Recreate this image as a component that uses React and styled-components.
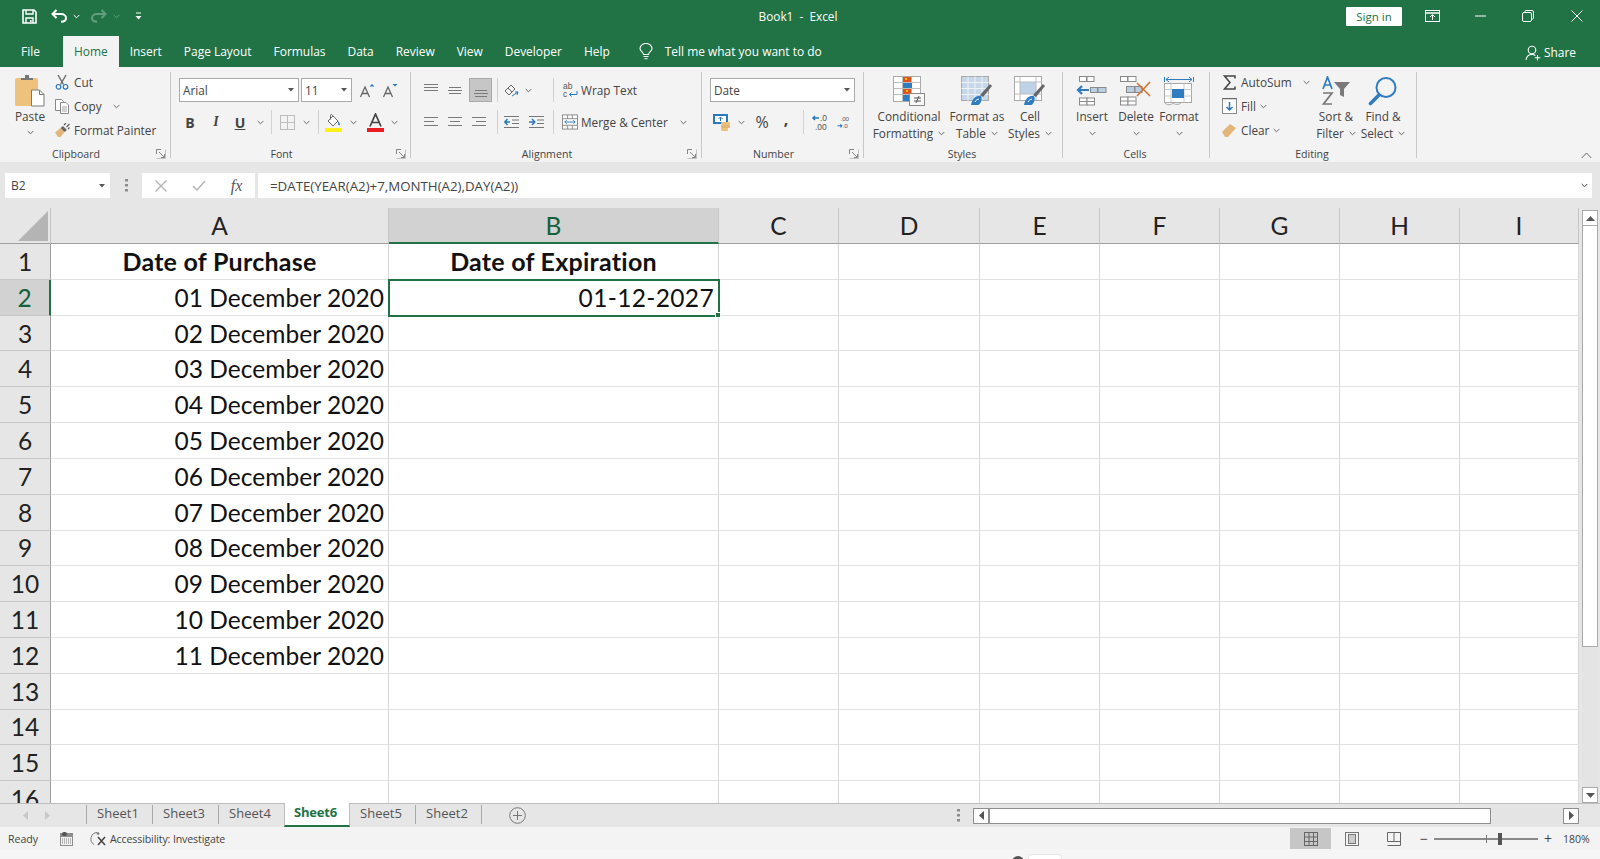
import React from "react";
import styled, { createGlobalStyle } from "styled-components";

const UI = `"Open Sans", "Noto Sans", "Liberation Sans", sans-serif`;
const SHEET = `Lato, "Liberation Sans", sans-serif`;
const GREEN = "#217346";

const Global = createGlobalStyle`
  html, body { margin: 0; padding: 0; background: #f3f3f3; }
  body { font-family: ${UI}; overflow: hidden; }
  * { box-sizing: border-box; }
`;

const Page = styled.div`
  width: 1600px; height: 859px; display: flex; flex-direction: column; overflow: hidden;
`;

/* ---------- title bar ---------- */
const TitleBar = styled.header`
  height: 34px; padding-bottom: 2px; background: ${GREEN}; display: grid; grid-template-columns: 1fr auto 1fr; align-items: center; color: #fff;
`;
const QuickAccess = styled.div`display: flex; align-items: center; padding-left: 20px;`;
const QuickSlot = styled.span`
  width: ${p => p.$w}px; margin-left: ${p => p.$ml ?? 0}px; display: flex; justify-content: center; align-items: center; opacity: ${p => p.$dim ? 0.3 : 1};
`;
const Title = styled.div`font-size: 11.8px; white-space: pre; margin-left: -4px;`;
const WindowControls = styled.div`display: flex; align-items: center; justify-content: flex-end;`;
const SignIn = styled.button`
  width: 56px; height: 19px; border: 0; padding: 0; background: #fff; color: ${GREEN}; font: 11.5px ${UI}; border-radius: 1px; margin-right: 5px;
`;
const WinSlot = styled.span`width: ${p => p.$w}px; display: flex; justify-content: center; align-items: center;`;

/* ---------- tabs ---------- */
const TabBar = styled.nav`
  height: 33px; background: ${GREEN}; display: flex; align-items: flex-end; padding-left: 10px; color: #fff; font-size: 11.95px;
`;
const Tab = styled.div`
  height: 31px; padding: 0 11px; margin-left: ${p => p.$ml ?? 0}px; display: flex; align-items: center;
  ${p => p.$active && `background:#f3f3f3; color:${GREEN};`}
`;
const TellMe = styled.div`display: flex; align-items: center; gap: 12px; height: 31px; padding: 0 0 0 18px; flex: 1;`;
const Share = styled.div`display: flex; align-items: center; gap: 3px; height: 31px; padding: 2px 24px 0 0;`;

/* ---------- ribbon ---------- */
const Ribbon = styled.section`
  height: 95px; background: #f3f3f3; padding-top: 5px; display: flex; position: relative; color: #444; font-size: 11.8px;
`;
const Group = styled.div`
  width: ${p => p.$w}px; height: 86px; flex: none; display: flex; flex-direction: column; border-right: 1px solid #c8c8c8;
`;
const GroupBody = styled.div`display: flex; height: 72px; flex: none; padding-left: ${p => p.$pl ?? 0}px;`;
const Foot = styled.div`
  display: flex; height: 12px; margin-top: 4px; line-height: 12px; font-size: 10.6px; color: #444; padding-right: ${p => p.$launcher ? 0 : 2}px;
`;
const FootLabel = styled.span`flex: 1; text-align: center;`;
const Launcher = styled.span`width: 18px; display: flex; justify-content: center; align-items: center; flex: none;`;

const PasteButton = styled.div`
  width: 42px; margin: 0 3px 0 9px; display: flex; flex-direction: column; align-items: center; gap: 2px; padding-top: 3px; line-height: 15px;
`;
const PasteChev = styled.span`display: flex; margin-top: 4px;`;
const SmallColumn = styled.div`display: flex; flex-direction: column; gap: 4px; width: ${p => p.$w ?? "auto"};`;
const SmallRow = styled.div`height: 20px; display: flex; align-items: center; gap: ${p => p.$gap ?? 4}px; white-space: nowrap;`;
const SmallIcon = styled.span`width: 16px; flex: none; display: flex; justify-content: center; align-items: center;`;

const ControlRows = styled.div`display: flex; flex-direction: column; gap: 8px; padding-top: 6px;`;
const ControlRow = styled.div`display: flex; align-items: center; height: 24px;`;
const Select = styled.div`
  width: ${p => p.$w}px; height: 24px; background: #fff; border: 1px solid #aaa; margin-right: ${p => p.$mr ?? 0}px;
  display: flex; align-items: center; justify-content: space-between; padding: 0 4px 0 3px; font-size: 11.8px; color: #444;
`;
const Slot = styled.span`
  width: ${p => p.$w}px; height: 24px; flex: none; display: flex; align-items: center; justify-content: center;
  margin-left: ${p => p.$ml ?? 0}px; margin-right: ${p => p.$mr ?? 0}px;
  ${p => p.$active && "background:#c6c6c6; border:1px solid #aaa;"}
`;
const Divider = styled.span`
  width: 1px; height: 24px; flex: none; background: #d2d2d2; margin-left: ${p => p.$ml ?? 0}px; margin-right: ${p => p.$mr ?? 0}px;
`;
const FormatLetter = styled.span`
  font-family: ${p => p.$serif ? `"Liberation Serif", serif` : UI}; font-size: ${p => p.$size ?? 14}px; color: #444;
  font-weight: ${p => p.$weight ?? 700}; font-style: ${p => p.$italic ? "italic" : "normal"};
  text-decoration: ${p => p.$under ? "underline" : "none"}; margin-top: ${p => p.$mt ?? 0}px;
`;
const WrapButton = styled.div`display: flex; align-items: center; gap: 3px; padding-left: 8px; white-space: nowrap; margin-top: ${p => p.$mt ?? 0}px;`;

const LargeButton = styled.div`
  width: ${p => p.$w}px; flex: none; display: flex; flex-direction: column; align-items: center; white-space: nowrap; line-height: 17px;
`;
const LargeIcon = styled.div`height: 36px; display: flex; align-items: center; justify-content: center; padding-top: 2px;`;
const LabelLine = styled.span`display: flex; align-items: center; gap: 5px; height: 17px;`;
const CollapseBtn = styled.span`position: absolute; right: 8px; bottom: 3px; display: flex;`;

/* ---------- formula bar ---------- */
const FormulaBar = styled.section`
  height: 46px; background: #e6e6e6; padding: 11px 8px 10px 5px; display: flex; align-items: stretch; color: #444;
`;
const NameBox = styled.div`
  width: 105px; background: #fff; display: flex; align-items: center; justify-content: space-between; padding: 0 5px 0 6px; font-size: 12px;
`;
const Grip = styled.span`width: 32px; display: flex; align-items: center; justify-content: center;`;
const FxBox = styled.div`width: 113px; background: #fff; display: flex; align-items: center; margin-right: 3px;`;
const FxSlot = styled.span`width: ${p => p.$w}px; display: flex; justify-content: center;`;
const Fx = styled.span`font: italic 16px "Liberation Serif", serif; color: #555;`;
const FormulaInput = styled.div`
  flex: 1; background: #fff; display: flex; align-items: center; justify-content: space-between; padding: 0 4px 0 12px; font-size: 13.3px; color: #444;
`;

/* ---------- sheet grid ---------- */
const SheetArea = styled.main`flex: 1; min-height: 0; display: flex; background: #e6e6e6; overflow: hidden;`;
const GridWrap = styled.div`width: 1579px; flex: none; height: 100%; overflow: hidden; background: #fff;`;
const Grid = styled.div`
  display: grid; grid-template-columns: 51px 338px 330px 120px 141px 120px 120px 120px 120px 119px;
  grid-auto-rows: 35.82px; grid-template-rows: 36px; font-family: ${SHEET};
`;
const Corner = styled.div`background: #e6e6e6; border-bottom: 1px solid #9f9f9f; border-right: 1px solid #c6c6c6; display: flex; align-items: flex-end; justify-content: flex-end; padding: 0 2px 2px 0;`;
const ColHead = styled.div`
  display: flex; align-items: center; justify-content: center; font-size: 24.5px;
  background: ${p => p.$sel ? "#d2d2d2" : "#e6e6e6"}; color: ${p => p.$sel ? "#14613a" : "#222"};
  border-right: 1px solid #c6c6c6; border-bottom: ${p => p.$sel ? `2px solid ${GREEN}` : "1px solid #9f9f9f"};
`;
const RowHead = styled.div`
  display: flex; align-items: center; justify-content: center; font-size: 24.5px;
  background: ${p => p.$sel ? "#d2d2d2" : "#e6e6e6"}; color: ${p => p.$sel ? "#14613a" : "#222"};
  border-bottom: 1px solid #c6c6c6; border-right: ${p => p.$sel ? `2px solid ${GREEN}` : "1px solid #9f9f9f"};
`;
const Cell = styled.div`
  display: flex; align-items: center; justify-content: ${p => p.$bold ? "center" : "flex-end"};
  padding-right: ${p => p.$bold ? 0 : 4}px; font-size: ${p => p.$bold ? 25 : 24.5}px; color: #111; font-weight: ${p => p.$bold ? 700 : 400};
  letter-spacing: ${p => p.$bold ? 0.25 : p.$sel ? 0.35 : 0.05}px; white-space: nowrap; position: relative;
  border-right: 1px solid #d8d8d8; border-bottom: 1px solid #e2e2e2;
  ${p => p.$sel && `outline: 2px solid ${GREEN}; outline-offset: -1px; z-index: 1;`}
`;
const FillHandle = styled.i`
  position: absolute; right: -3px; bottom: -3px; width: 6px; height: 6px; background: ${GREEN}; border: 1px solid #fff;
`;
const VScroll = styled.aside`
  flex: 1; display: flex; flex-direction: column; padding: 2px 2px 0 3px; background: #e6e6e6;
`;
const ScrollBtn = styled.span`
  height: ${p => p.$h ?? 16}px; background: #fff; border: 1px solid #ababab; display: flex; align-items: center; justify-content: center; flex: none;
`;
const VThumb = styled.span`height: 421px; background: #fff; border: 1px solid #ababab; border-top: 0; flex: none;`;
const Track = styled.span`
  flex: 1; background-color: #e4e4e4; background-image: radial-gradient(#d2d2d2 0.5px, transparent 0.6px); background-size: 2px 2px;
`;

/* ---------- sheet tabs ---------- */
const SheetBar = styled.section`
  height: 24px; background: #e6e6e6; border-top: 1px solid #bdbdbd; display: flex; align-items: stretch; color: #555; position: relative;
`;
const NavArrows = styled.div`width: 86px; display: flex; align-items: center; padding-left: 23px; gap: 17px;`;
const SheetTab = styled.div`
  width: ${p => p.$w ?? 65}px; height: 24px; margin-top: -1px; display: flex; align-items: center; justify-content: center; font-size: 13px; padding: 0 3px 4px 0;
  ${p => p.$active
    ? `background:#fff; color:${GREEN}; font-weight:700; border-bottom:2px solid ${GREEN}; border-left:1px solid #bdbdbd; border-right:1px solid #bdbdbd; letter-spacing:-.2px;`
    : ""}
`;
const TabSep = styled.span`width: 1px; height: 19px; background: #a8a8a8; align-self: center; flex: none; margin-bottom: 2px;`;
const AddSheet = styled.span`margin-left: 27px; display: flex; align-items: center;`;
const BarGrip = styled.span`margin-left: auto; display: flex; align-items: center;`;
const HScroll = styled.div`
  margin-left: 13px; width: 606px; margin-right: 21px; height: 16px; align-self: center; display: flex;
`;
const HThumb = styled.span`width: 502px; background: #fff; border: 1px solid #8f8f8f; flex: none;`;
const HBtn = styled.span`width: 16px; background: #fff; border: 1px solid #8f8f8f; flex: none; display: flex; align-items: center; justify-content: center;`;

/* ---------- status ---------- */
const StatusBar = styled.footer`
  height: 22px; background: #f3f3f3; display: flex; align-items: center; color: #444; font-size: 10.6px; padding-top: 1px;
`;
const StatusText = styled.span`padding-left: 8px; width: 58px;`;
const StatusIcon = styled.span`width: ${p => p.$w}px; margin-left: ${p => p.$ml ?? 0}px; display: flex; justify-content: center; align-items: center; flex: none;`;
const A11y = styled.span`letter-spacing: -0.12px;`;
const StatusRight = styled.div`margin-left: auto; display: flex; align-items: center; height: 100%;`;
const ViewBtn = styled.span`
  width: ${p => p.$w}px; height: 22px; display: flex; align-items: center; justify-content: center; ${p => p.$active && "background:#c6c6c6;"}
`;
const ZoomTrack = styled.div`display: flex; align-items: center; width: 132px; justify-content: space-between; margin: 0 11px 0 5px; font-size: 14px; line-height: 1;`;
const Slider = styled.span`width: 104px; height: 2px; background: #8a8a8a; position: relative; display: block;`;
const SliderThumb = styled.i`position: absolute; left: 64px; top: -5px; width: 4px; height: 12px; background: #555;`;
const SliderTick = styled.i`position: absolute; left: 52px; top: -3px; width: 1px; height: 8px; background: #777;`;
const ZoomPct = styled.span`width: 37px; font-size: 10.5px;`;
const BottomStrip = styled.div`height: 10px; background: #f5f5f5; display: flex; padding-left: 1012px; align-items: flex-start; gap: 4px; overflow: hidden;`;
const Blob = styled.i`width: 12px; height: 12px; margin-top: 7px; border-radius: 50%; background: #555;`;
const WhiteTab = styled.i`width: 34px; height: 12px; margin-top: 5px; background: #fff; border: 1px solid #e6e6e6; border-radius: 4px 4px 0 0;`;

/* ---------- icons ---------- */
const Chev = ({ c = "#666" }) => (
  <svg width="7" height="5" viewBox="0 0 7 5"><path d="M.7 1 3.500 3.800 6.300 1" fill="none" stroke={c} strokeWidth="1" /></svg>
);
const Tri = () => <svg width="6" height="4" viewBox="0 0 6 4"><path d="M0 0h6L3 3.500z" fill="#555" /></svg>;
const Save = () => (
  <svg width="15" height="15" viewBox="0 0 15 15" fill="none" stroke="#fff" strokeWidth="1.600">
    <path d="M1 1h11l2 2v11H1z" /><path d="M4 1v4h7V1M4 14V9h7v5" strokeWidth="1.400" /><rect x="8" y="11" width="1.600" height="2" fill="#fff" stroke="none" />
  </svg>
);
const Undo = ({ flip }) => (
  <svg width="17" height="14" viewBox="0 0 17 14" style={flip ? { transform: "scaleX(-1)" } : undefined}>
    <path d="M5.500 1 1.500 5l4 4" fill="none" stroke="#fff" strokeWidth="2" />
    <path d="M2 5h8c3 0 5 1.800 5 4 0 2.200-2 3.800-5 3.800" fill="none" stroke="#fff" strokeWidth="2" />
  </svg>
);
const CustomizeQ = () => (
  <svg width="7" height="8" viewBox="0 0 7 8"><path d="M1 1h5" stroke="#fff" /><path d="M.5 4h6L3.500 7.500z" fill="#fff" /></svg>
);
const RibbonDisplay = () => (
  <svg width="15" height="12" viewBox="0 0 15 12" fill="none" stroke="#fff"><rect x=".5" y=".5" width="14" height="11" /><path d="M.5 3h14" strokeWidth="1.500" /><path d="M7.500 10V5M5 7l2.500-2.500L10 7" /></svg>
);
const Minimize = () => <svg width="11" height="2" viewBox="0 0 11 2"><path d="M0 1h11" stroke="#fff" /></svg>;
const Restore = () => (
  <svg width="12" height="12" viewBox="0 0 12 12" fill="none" stroke="#fff"><rect x=".5" y="2.500" width="9" height="9" rx="1.500" /><path d="M3 2.500V1.500a1 1 0 0 1 1-1h6a1.500 1.500 0 0 1 1.500 1.500v6a1 1 0 0 1-1 1H9.500" /></svg>
);
const CloseX = () => <svg width="12" height="12" viewBox="0 0 12 12"><path d="M.5.500l11 11M11.500.500l-11 11" stroke="#fff" /></svg>;
const Bulb = () => (
  <svg width="14" height="17" viewBox="0 0 14 17" fill="none" stroke="#fff" strokeWidth="1.100">
    <path d="M4.500 11.500C4.300 9 1 8.200 1 5.500a6 5 0 0 1 12 0c0 2.700-3.300 3.500-3.500 6z" /><path d="M4.500 13.500h5M5.500 15.800h3" />
  </svg>
);
const Person = () => (
  <svg width="16" height="16" viewBox="0 0 16 16" fill="none" stroke="#fff" strokeWidth="1.100">
    <circle cx="7" cy="5" r="3.800" /><path d="M1 15c.500-3.500 2.500-5.500 6-5.500 1.500 0 2.500.300 3.400 1" /><path d="M12.500 10v5.500M9.800 12.800h5.500" />
  </svg>
);
const PasteIcon = () => (
  <svg width="30" height="32" viewBox="0 0 30 32">
    <rect x="0" y="3" width="23" height="28" rx="1.500" fill="#eec27c" />
    <path d="M6 5V3h4V0h4v3h4v2z" fill="#777" />
    <path d="M16.500 15h8l4.500 4.500V31H16.500z" fill="#fff" stroke="#7a7a7a" />
    <path d="M24.500 15v4.500H29" fill="none" stroke="#7a7a7a" />
  </svg>
);
const Cut = () => (
  <svg width="14" height="16" viewBox="0 0 14 16" fill="none">
    <path d="M3 1l5.500 9.500M11 1 5.500 10.500" stroke="#6c6c6c" strokeWidth="1.400" />
    <circle cx="3.500" cy="12.800" r="2.300" stroke="#2a78bd" strokeWidth="1.200" /><circle cx="10.500" cy="12.800" r="2.300" stroke="#2a78bd" strokeWidth="1.200" />
  </svg>
);
const Copy = () => (
  <svg width="14" height="15" viewBox="0 0 14 15" fill="#fff" stroke="#7a7a7a" strokeWidth=".9">
    <path d="M.5.500h6l2 2v9h-8z" /><path d="M5.500 3.500h5.500l2.500 2.500v8.500h-8z" />
    <path d="M7 8h5M7 10h5M7 12h5" stroke="#9a9a9a" fill="none" />
  </svg>
);
const Brush = () => (
  <svg width="15" height="14" viewBox="0 0 15 14">
    <path d="M0 9.500 5.500 5 9.500 9l-4 5H3z" fill="#e3b57a" /><path d="M5.500 5 8 3l4 4-2.500 2z" fill="#666" /><path d="M9 2l2-2M11.500 4l3-3M13 6l1.500-1.500" stroke="#555" strokeWidth="1.100" />
  </svg>
);
const LaunchIcon = () => (
  <svg width="10" height="10" viewBox="0 0 10 10" fill="none" stroke="#777" strokeWidth=".9"><path d="M.5 5V.5H5M3 3l5 5M8.500 5v3.500H5" /><path d="M9.500 .5v9h-9" stroke="#bbb" /></svg>
);
const GrowA = ({ down }) => (
  <svg width="16" height="15" viewBox="0 0 16 15">
    <path d="M1.500 14 6 4l4.500 10M3.200 10.500h5.600" fill="none" stroke="#666" strokeWidth="1.300" />
    <path d={down ? "M10.500 1h5L13 3.500z" : "M10.500 3.500h5L13 1z"} fill="#2a78bd" />
  </svg>
);
const Borders = () => (
  <svg width="15" height="15" viewBox="0 0 15 15" fill="none" stroke="#bdbdbd"><rect x=".5" y=".5" width="14" height="14" /><path d="M7.500 0v15M0 7.500h15" /></svg>
);
const FillColor = () => (
  <svg width="18" height="19" viewBox="0 0 18 19">
    <path d="M3 8 8 3l5 5-5 5z" fill="#fff" stroke="#666" /><path d="M8 3C7 1 5.500 1 5.500 2.500v4" fill="none" stroke="#666" />
    <path d="M13 8c1.500 2 2 2.500 2 3.500s-1.500 1-1.800 0z" fill="#2a78bd" />
    <rect x="0" y="15" width="17" height="4" fill="#ffef1a" />
  </svg>
);
const FontColor = () => (
  <svg width="17" height="19" viewBox="0 0 17 19">
    <path d="M3 13.500 8.500 1 14 13.500M5 9.500h7" fill="none" stroke="#444" strokeWidth="1.700" />
    <rect x="0" y="15" width="17" height="4" fill="#ec1c24" />
  </svg>
);
const Lines = ({ y = [3, 7, 11], w = [[1, 15], [3, 13], [1, 15]] }) => (
  <svg width="16" height="14" viewBox="0 0 16 14" stroke="#7a7a7a">
    {y.map((v, i) => <path key={i} d={`M${w[i][0]} ${v}.5H${w[i][1]}`} />)}
  </svg>
);
const Orient = () => (
  <svg width="17" height="15" viewBox="0 0 17 15" fill="none" stroke="#666">
    <path d="M2 8 8 2l4 4-6 6zM5 5l4 4" /><path d="M9 13l6-4M15 9l-1 3M15 9l-3 0" stroke="#2a78bd" />
  </svg>
);
const Indent = ({ out }) => (
  <svg width="17" height="14" viewBox="0 0 17 14">
    <path d="M1 1.500h15M9 5h7M9 8.500h7M1 12.500h15" stroke="#777" />
    {out
      ? <path d="M7 7H3M4.500 4 1.800 7l2.700 3" fill="none" stroke="#2a78bd" strokeWidth="1.500" />
      : <path d="M1 7h5M4 4l2.800 3L4 10" fill="none" stroke="#2a78bd" strokeWidth="1.500" />}
  </svg>
);
const WrapIcon = () => (
  <svg width="16" height="16" viewBox="0 0 16 16">
    <text x="1" y="7" fontSize="8.500" fill="#555" fontFamily="Liberation Sans">ab</text>
    <text x="1" y="15" fontSize="8.500" fill="#555" fontFamily="Liberation Sans">c</text>
    <path d="M15 9v3.500H7.500M9.500 10.500l-2 2 2 2" fill="none" stroke="#2a78bd" />
  </svg>
);
const MergeIcon = () => (
  <svg width="17" height="16" viewBox="0 0 17 16" fill="none" stroke="#888">
    <rect x=".5" y=".5" width="16" height="15" fill="#fff" /><path d="M.5 4.500h16M.5 11.500h16M6 .5v4M11 .5v4M6 11.500v4M11 11.500v4" />
    <path d="M3 8h11M5 6 3 8l2 2M12 6l2 2-2 2" stroke="#2a78bd" />
  </svg>
);
const Currency = () => (
  <svg width="17" height="17" viewBox="0 0 17 17">
    <rect x="0" y="0" width="15" height="10" fill="#2a78bd" /><rect x="2" y="2" width="11" height="6" fill="#fff" />
    <path d="M7.500 3v4M5.500 5l2-2 2 2" stroke="#2a78bd" fill="none" />
    <rect x="8" y="8" width="9" height="3" rx="1" fill="#eec27c" /><rect x="8" y="11" width="9" height="3" rx="1" fill="#e3b57a" /><rect x="8" y="14" width="7" height="3" rx="1" fill="#eec27c" />
  </svg>
);
const DecIcon = ({ more }) => (
  <svg width="19" height="17" viewBox="0 0 19 17">
    <text x={more ? 9 : 6} y="7" fontSize="8.500" fill="#555" fontFamily="Liberation Sans">{more ? ".0" : ".00"}</text>
    <text x={more ? 4 : 9} y="16" fontSize="8.500" fill="#555" fontFamily="Liberation Sans">{more ? ".00" : ".0"}</text>
    {more
      ? <path d="M8 4H2M4 2 2 4l2 2" fill="none" stroke="#2a78bd" strokeWidth="1.500" />
      : <path d="M2 13h6M6 11l2 2-2 2" fill="none" stroke="#2a78bd" strokeWidth="1.500" />}
  </svg>
);
const CondFmt = () => (
  <svg width="32" height="30" viewBox="0 0 32 30">
    <g fill="#fff" stroke="#a9a9a9"><rect x=".5" y=".5" width="27" height="25" /></g>
    <path d="M9.500 .5v25M18.500 .5v25M.5 6.500h27M.5 12.500h27M.5 18.500h27" stroke="#bdbdbd" fill="none" />
    <rect x="10" y="1" width="8" height="5" fill="#e2521f" /><rect x="12" y="2" width="2" height="2" fill="#ffc000" />
    <rect x="10" y="7" width="9" height="5" fill="#2f7cc1" /><rect x="10" y="13" width="8" height="5" fill="#e2521f" /><rect x="13" y="14" width="2" height="2" fill="#ffc000" /><rect x="10" y="19" width="6" height="6" fill="#2f7cc1" />
    <rect x="16.500" y="17.500" width="15" height="12" fill="#f8f8f8" stroke="#8a8a8a" />
    <path d="M21 25h7M21 22h7M26 20l-3 7" stroke="#555" fill="none" />
  </svg>
);
const TableFmt = ({ cell }) => (
  <svg width="32" height="30" viewBox="0 0 32 30">
    <rect x=".5" y=".5" width="27" height="24" fill={cell ? "#fff" : "#c6d7e8"} stroke="#a9a9a9" />
    {cell
      ? <><rect x="6" y="6" width="16" height="12" fill="#bdd2e6" /><path d="M6 .5v24M22 .5v24M.5 6h27M.5 18h27" stroke="#bdbdbd" fill="none" /></>
      : <path d="M7 .5v24M14 .5v24M21 .5v24M.5 6.500h27M.5 12.500h27M.5 18.500h27" stroke="#eef3f8" fill="none" />}
    <path d="M19 19 29 8l2 2-9 11z" fill="#666" />
    <path d="M10 29c1-6 5-10 10-9 2 3-1 9-3 9z" fill="#2f7cc1" /><path d="M14 26c1-2 2-2.500 4-3" stroke="#fff" fill="none" />
  </svg>
);
const InsertIcon = () => (
  <svg width="32" height="30" viewBox="0 0 32 30" fill="#fff" stroke="#8a8a8a">
    <rect x="3.500" y=".5" width="7" height="5" /><rect x="11" y=".5" width="7" height="5" />
    <rect x="14.500" y="11.500" width="7" height="5" fill="#b8cfe4" /><rect x="22" y="11.500" width="8" height="5" fill="#b8cfe4" />
    <rect x="3.500" y="22" width="7.500" height="7" /><rect x="11" y="22" width="7.500" height="7" /><path d="M3.500 25.500h15" />
    <path d="M13 14H2M6 10 2 14l4 4" fill="none" stroke="#2f7cc1" strokeWidth="2.200" />
  </svg>
);
const DeleteIcon = () => (
  <svg width="32" height="30" viewBox="0 0 32 30" fill="#fff" stroke="#8a8a8a">
    <rect x=".5" y=".5" width="7" height="5" /><rect x="8" y=".5" width="8" height="5" />
    <rect x="6.500" y="10.500" width="8" height="6" fill="#b8cfe4" /><rect x="15" y="10.500" width="7" height="6" fill="#b8cfe4" />
    <rect x=".5" y="21" width="7.500" height="8" /><rect x="8" y="21" width="8" height="8" /><path d="M.5 25h15" />
    <path d="M17 7 30 20M30 6 17 20" stroke="#d5702a" strokeWidth="1.500" fill="none" />
  </svg>
);
const FormatIcon = () => (
  <svg width="30" height="30" viewBox="0 0 30 30" fill="none" stroke="#a9a9a9">
    <path d="M.5 1v5M29.500 1v5" stroke="#2f7cc1" /><path d="M2 3.500h26M5 1 2 3.500 5 6M25 1l3 2.500L25 6" stroke="#2f7cc1" />
    <rect x=".5" y="7.500" width="27" height="19" fill="#fff" /><path d="M7 7.500v19M20 7.500v19M.5 13.500h27M.5 20h27" stroke="#c8c8c8" />
    <rect x="8" y="13" width="12" height="9" fill="#2f7cc1" stroke="none" />
    <path d="M1 26.500c0 3 8 3 8 0 0 2.500 8 2.500 8 0" />
  </svg>
);
const Sigma = () => <svg width="13" height="15" viewBox="0 0 13 15"><path d="M12 3.500V1H1.500L7 7.500 1.500 14H12v-2.500" fill="none" stroke="#444" strokeWidth="1.500" /></svg>;
const FillIcon = () => (
  <svg width="15" height="16" viewBox="0 0 15 16"><rect x=".5" y=".5" width="14" height="15" fill="#fff" stroke="#8a8a8a" /><path d="M.5 .5h14" stroke="#666" strokeWidth="1.500" /><path d="M7.500 4v8M4.500 9l3 3 3-3" fill="none" stroke="#2a78bd" strokeWidth="1.500" /></svg>
);
const Eraser = () => (
  <svg width="14" height="13" viewBox="0 0 14 13"><path d="M0 8 8 0l6 4-8 9H3z" fill="#e3b57a" /></svg>
);
const SortFilter = () => (
  <svg width="30" height="30" viewBox="0 0 30 30">
    <path d="M2 13 6.500 1 11 13M3.500 9h6" fill="none" stroke="#2f7cc1" strokeWidth="1.700" />
    <path d="M2 17h9L2.500 28H11" fill="none" stroke="#777" strokeWidth="1.700" />
    <path d="M13 6h16l-6 7v8l-4-2v-6z" fill="#7a7a7a" />
  </svg>
);
const Magnifier = () => (
  <svg width="30" height="30" viewBox="0 0 30 30" fill="none"><circle cx="18" cy="11.500" r="9.500" stroke="#2f7cc1" strokeWidth="2" /><path d="M11 19 2.500 27.500" stroke="#2f7cc1" strokeWidth="3.600" strokeLinecap="round" /></svg>
);
const CornerTri = () => <svg width="30" height="30" viewBox="0 0 30 30"><path d="M30 0v30H0z" fill="#b4b4b4" /></svg>;
const Dots = () => <svg width="3" height="13" viewBox="0 0 3 13" fill="#8d8d8d"><rect width="3" height="2.500" /><rect y="5" width="3" height="2.500" /><rect y="10" width="3" height="2.500" /></svg>;
const Cancel = () => <svg width="12" height="12" viewBox="0 0 12 12"><path d="M.5.500l11 11M11.500.500l-11 11" stroke="#b5b5b5" strokeWidth="1.400" /></svg>;
const Enter = () => <svg width="14" height="11" viewBox="0 0 14 11"><path d="M1 6l4 4 8-9" fill="none" stroke="#b5b5b5" strokeWidth="1.500" /></svg>;
const Arrow = ({ dir, c = "#555" }) => {
  const d = { up: "M0 5h9L4.500 0z", down: "M0 0h9L4.500 5z", left: "M5 0v9L0 4.500z", right: "M0 0v9l5-4.500z" }[dir];
  const s = dir === "up" || dir === "down" ? [9, 5] : [5, 9];
  return <svg width={s[0]} height={s[1]} viewBox={`0 0 ${s[0]} ${s[1]}`}><path d={d} fill={c} /></svg>;
};
const PlusCircle = () => (
  <svg width="17" height="17" viewBox="0 0 17 17" fill="none" stroke="#777"><circle cx="8.500" cy="8.500" r="7.800" /><path d="M8.500 4v9M4 8.500h9" /></svg>
);
const Macro = () => (
  <svg width="13" height="14" viewBox="0 0 13 14"><rect x="0" y="1" width="13" height="13" fill="#8d8d8d" /><rect x="1" y="5" width="11" height="8" fill="#f3f3f3" /><path d="M2 7h9M2 9h9M2 11h9" stroke="#777" strokeDasharray="1 1" /><rect x="2" y="0" width="5" height="4" rx="2" fill="#555" /></svg>
);
const AccIcon = () => (
  <svg width="17" height="16" viewBox="0 0 17 16" fill="none"><path d="M7 1.500a6.500 6.500 0 0 0-3 12" stroke="#777" /><path d="M8 6l7 8M15 6l-7 8" stroke="#444" strokeWidth="1.500" /><circle cx="8" cy="2.500" r="1.300" fill="#777" /></svg>
);
const ViewNormal = () => (
  <svg width="14" height="14" viewBox="0 0 14 14" fill="none" stroke="#666"><rect x=".5" y=".5" width="13" height="13" /><path d="M5 0v14M9.500 0v14M0 5h14M0 9.500h14" /></svg>
);
const ViewPage = () => (
  <svg width="14" height="14" viewBox="0 0 14 14" fill="none" stroke="#777"><rect x=".5" y=".5" width="13" height="13" /><rect x="3.500" y="2.500" width="7" height="9" fill="#ccc" /></svg>
);
const ViewBreak = () => (
  <svg width="14" height="14" viewBox="0 0 14 14" fill="none" stroke="#666"><path d="M.5 9.500V.5h13v13H.5" /><path d="M.5 9.500h13M7 .5v9" /></svg>
);
const Collapse = () => <svg width="11" height="7" viewBox="0 0 11 7"><path d="M.7 6 5.500 1l4.800 5" fill="none" stroke="#666" /></svg>;

const COLS = ["A", "B", "C", "D", "E", "F", "G", "H", "I"];
const DATES = ["01", "02", "03", "04", "05", "06", "07", "08", "09", "10", "11"].map(d => `${d} December 2020`);
const ROWS = Array.from({ length: 16 }, (_, i) => i + 1);

function cellsFor(row) {
  return COLS.map(c => {
    if (row === 1 && c === "A") return <Cell key={c} $bold>Date of Purchase</Cell>;
    if (row === 1 && c === "B") return <Cell key={c} $bold>Date of Expiration</Cell>;
    if (c === "A" && DATES[row - 2]) return <Cell key={c}>{DATES[row - 2]}</Cell>;
    if (row === 2 && c === "B") return <Cell key={c} $sel>01-12-2027<FillHandle /></Cell>;
    return <Cell key={c} />;
  });
}

export default function App() {
  return (
    <Page>
      <Global />
      <TitleBar>
        <QuickAccess>
          <QuickSlot $w={18}><Save /></QuickSlot>
          <QuickSlot $w={24} $ml={9}><Undo /></QuickSlot>
          <QuickSlot $w={10}><Chev c="#fff" /></QuickSlot>
          <QuickSlot $w={20} $ml={7} $dim><Undo flip /></QuickSlot>
          <QuickSlot $w={14} $ml={1} $dim><Chev c="#fff" /></QuickSlot>
          <QuickSlot $w={16} $ml={7}><CustomizeQ /></QuickSlot>
        </QuickAccess>
        <Title>Book1  -  Excel</Title>
        <WindowControls>
          <SignIn>Sign in</SignIn>
          <WinSlot $w={50}><RibbonDisplay /></WinSlot>
          <WinSlot $w={46}><Minimize /></WinSlot>
          <WinSlot $w={50}><Restore /></WinSlot>
          <WinSlot $w={47}><CloseX /></WinSlot>
        </WindowControls>
      </TitleBar>

      <TabBar>
        <Tab>File</Tab>
        <Tab $active $ml={12}>Home</Tab>
        <Tab>Insert</Tab>
        <Tab>Page Layout</Tab>
        <Tab>Formulas</Tab>
        <Tab>Data</Tab>
        <Tab>Review</Tab>
        <Tab>View</Tab>
        <Tab>Developer</Tab>
        <Tab>Help</Tab>
        <TellMe><Bulb />Tell me what you want to do</TellMe>
        <Share><Person />Share</Share>
      </TabBar>

      <Ribbon>
        <Group $w={171}>
          <GroupBody>
            <PasteButton>
              <PasteIcon />
              <span>Paste</span>
              <PasteChev><Chev /></PasteChev>
            </PasteButton>
            <SmallColumn>
              <SmallRow><SmallIcon><Cut /></SmallIcon>Cut</SmallRow>
              <SmallRow><SmallIcon><Copy /></SmallIcon>Copy<Slot $w={22}><Chev /></Slot></SmallRow>
              <SmallRow><SmallIcon><Brush /></SmallIcon>Format Painter</SmallRow>
            </SmallColumn>
          </GroupBody>
          <Foot $launcher><FootLabel>Clipboard</FootLabel><Launcher><LaunchIcon /></Launcher></Foot>
        </Group>

        <Group $w={240}>
          <GroupBody $pl={8}>
            <ControlRows>
              <ControlRow>
                <Select $w={120} $mr={2}>Arial<Tri /></Select>
                <Select $w={51}>11<Tri /></Select>
                <Slot $w={22} $ml={4}><GrowA /></Slot>
                <Slot $w={22} $ml={1}><GrowA down /></Slot>
              </ControlRow>
              <ControlRow>
                <Slot $w={22}><FormatLetter>B</FormatLetter></Slot>
                <Slot $w={30}><FormatLetter $serif $italic>I</FormatLetter></Slot>
                <Slot $w={18}><FormatLetter $under>U</FormatLetter></Slot>
                <Slot $w={22}><Chev /></Slot>
                <Divider />
                <Slot $w={30}><Borders /></Slot>
                <Slot $w={8} $mr={8}><Chev /></Slot>
                <Divider />
                <Slot $w={30}><FillColor /></Slot>
                <Slot $w={8} $mr={3}><Chev /></Slot>
                <Slot $w={30}><FontColor /></Slot>
                <Slot $w={8}><Chev /></Slot>
              </ControlRow>
            </ControlRows>
          </GroupBody>
          <Foot $launcher><FootLabel>Font</FootLabel><Launcher><LaunchIcon /></Launcher></Foot>
        </Group>

        <Group $w={291}>
          <GroupBody $pl={8}>
            <ControlRows>
              <ControlRow>
                <Slot $w={24}><Lines y={[1, 4, 7]} w={[[1, 15], [1, 15], [1, 15]]} /></Slot>
                <Slot $w={24}><Lines y={[4, 7, 10]} w={[[2, 14], [1, 15], [2, 14]]} /></Slot>
                <Slot $w={23} $ml={2} $active><Lines y={[7, 10, 13]} w={[[2, 14], [1, 15], [2, 14]]} /></Slot>
                <Divider $ml={5} />
                <Slot $w={26}><Orient /></Slot>
                <Slot $w={8} $mr={21}><Chev /></Slot>
                <Divider />
                <WrapButton $mt={-1}><SmallIcon><WrapIcon /></SmallIcon>Wrap Text</WrapButton>
              </ControlRow>
              <ControlRow>
                <Slot $w={24}><Lines y={[2, 6, 10]} w={[[1, 15], [1, 11], [1, 15]]} /></Slot>
                <Slot $w={24}><Lines y={[2, 6, 10]} w={[[1, 15], [3, 13], [1, 15]]} /></Slot>
                <Slot $w={24}><Lines y={[2, 6, 10]} w={[[1, 15], [5, 15], [1, 15]]} /></Slot>
                <Divider $ml={6} />
                <Slot $w={26}><Indent out /></Slot>
                <Slot $w={24} $mr={5}><Indent /></Slot>
                <Divider />
                <WrapButton><SmallIcon><MergeIcon /></SmallIcon>Merge &amp; Center<Slot $w={26}><Chev /></Slot></WrapButton>
              </ControlRow>
            </ControlRows>
          </GroupBody>
          <Foot $launcher><FootLabel>Alignment</FootLabel><Launcher><LaunchIcon /></Launcher></Foot>
        </Group>

        <Group $w={162}>
          <GroupBody $pl={8}>
            <ControlRows>
              <ControlRow><Select $w={145}>Date<Tri /></Select></ControlRow>
              <ControlRow>
                <Slot $w={22}><Currency /></Slot>
                <Slot $w={18}><Chev /></Slot>
                <Slot $w={24}><FormatLetter $weight={400} $size={16}>%</FormatLetter></Slot>
                <Slot $w={24}><FormatLetter $size={16} $mt={-6}>,</FormatLetter></Slot>
                <Divider $ml={5} />
                <Slot $w={32}><DecIcon more /></Slot>
                <Slot $w={14}><DecIcon /></Slot>
              </ControlRow>
            </ControlRows>
          </GroupBody>
          <Foot $launcher><FootLabel>Number</FootLabel><Launcher><LaunchIcon /></Launcher></Foot>
        </Group>

        <Group $w={199}>
          <GroupBody>
            <LargeButton $w={90}>
              <LargeIcon><CondFmt /></LargeIcon>
              <LabelLine>Conditional</LabelLine>
              <LabelLine>Formatting<Chev /></LabelLine>
            </LargeButton>
            <LargeButton $w={46}>
              <LargeIcon><TableFmt /></LargeIcon>
              <LabelLine>Format as</LabelLine>
              <LabelLine>Table<Chev /></LabelLine>
            </LargeButton>
            <LargeButton $w={60}>
              <LargeIcon><TableFmt cell /></LargeIcon>
              <LabelLine>Cell</LabelLine>
              <LabelLine>Styles<Chev /></LabelLine>
            </LargeButton>
          </GroupBody>
          <Foot><FootLabel>Styles</FootLabel></Foot>
        </Group>

        <Group $w={147}>
          <GroupBody>
            <LargeButton $w={58}>
              <LargeIcon><InsertIcon /></LargeIcon>
              <LabelLine>Insert</LabelLine>
              <LabelLine><Chev /></LabelLine>
            </LargeButton>
            <LargeButton $w={30}>
              <LargeIcon><DeleteIcon /></LargeIcon>
              <LabelLine>Delete</LabelLine>
              <LabelLine><Chev /></LabelLine>
            </LargeButton>
            <LargeButton $w={56}>
              <LargeIcon><FormatIcon /></LargeIcon>
              <LabelLine>Format</LabelLine>
              <LabelLine><Chev /></LabelLine>
            </LargeButton>
          </GroupBody>
          <Foot><FootLabel>Cells</FootLabel></Foot>
        </Group>

        <Group $w={207}>
          <GroupBody $pl={11}>
            <SmallColumn $w="89px">
              <SmallRow><SmallIcon><Sigma /></SmallIcon>AutoSum<Slot $w={22}><Chev /></Slot></SmallRow>
              <SmallRow><SmallIcon><FillIcon /></SmallIcon>Fill<Chev /></SmallRow>
              <SmallRow><SmallIcon><Eraser /></SmallIcon>Clear<Chev /></SmallRow>
            </SmallColumn>
            <LargeButton $w={52}>
              <LargeIcon><SortFilter /></LargeIcon>
              <LabelLine>Sort &amp;</LabelLine>
              <LabelLine>Filter<Chev /></LabelLine>
            </LargeButton>
            <LargeButton $w={42}>
              <LargeIcon><Magnifier /></LargeIcon>
              <LabelLine>Find &amp;</LabelLine>
              <LabelLine>Select<Chev /></LabelLine>
            </LargeButton>
          </GroupBody>
          <Foot><FootLabel>Editing</FootLabel></Foot>
        </Group>
        <CollapseBtn><Collapse /></CollapseBtn>
      </Ribbon>

      <FormulaBar>
        <NameBox>B2<Tri /></NameBox>
        <Grip><Dots /></Grip>
        <FxBox>
          <FxSlot $w={38}><Cancel /></FxSlot>
          <FxSlot $w={38}><Enter /></FxSlot>
          <FxSlot $w={37}><Fx>fx</Fx></FxSlot>
        </FxBox>
        <FormulaInput>=DATE(YEAR(A2)+7,MONTH(A2),DAY(A2))<Chev c="#444" /></FormulaInput>
      </FormulaBar>

      <SheetArea>
        <GridWrap>
          <Grid>
            <Corner><CornerTri /></Corner>
            {COLS.map(c => <ColHead key={c} $sel={c === "B"}>{c}</ColHead>)}
            {ROWS.map(r => (
              <React.Fragment key={r}>
                <RowHead $sel={r === 2}>{r}</RowHead>
                {cellsFor(r)}
              </React.Fragment>
            ))}
          </Grid>
        </GridWrap>
        <VScroll>
          <ScrollBtn><Arrow dir="up" /></ScrollBtn>
          <VThumb />
          <Track />
          <ScrollBtn><Arrow dir="down" /></ScrollBtn>
        </VScroll>
      </SheetArea>

      <SheetBar>
        <NavArrows><Arrow dir="left" c="#c8c8c8" /><Arrow dir="right" c="#c8c8c8" /></NavArrows>
        <TabSep />
        <SheetTab>Sheet1</SheetTab><TabSep />
        <SheetTab>Sheet3</SheetTab><TabSep />
        <SheetTab>Sheet4</SheetTab>
        <SheetTab $active $w={66}>Sheet6</SheetTab>
        <SheetTab>Sheet5</SheetTab><TabSep />
        <SheetTab>Sheet2</SheetTab><TabSep />
        <AddSheet><PlusCircle /></AddSheet>
        <BarGrip><Dots /></BarGrip>
        <HScroll>
          <HBtn><Arrow dir="left" /></HBtn>
          <HThumb />
          <Track />
          <HBtn><Arrow dir="right" /></HBtn>
        </HScroll>
      </SheetBar>

      <StatusBar>
        <StatusText>Ready</StatusText>
        <StatusIcon $w={16}><Macro /></StatusIcon>
        <StatusIcon $w={24} $ml={12}><AccIcon /></StatusIcon>
        <A11y>Accessibility: Investigate</A11y>
        <StatusRight>
          <ViewBtn $w={41} $active><ViewNormal /></ViewBtn>
          <ViewBtn $w={42}><ViewPage /></ViewBtn>
          <ViewBtn $w={42}><ViewBreak /></ViewBtn>
          <ZoomTrack>
            <span>−</span>
            <Slider><SliderTick /><SliderThumb /></Slider>
            <span>+</span>
          </ZoomTrack>
          <ZoomPct>180%</ZoomPct>
        </StatusRight>
      </StatusBar>
      <BottomStrip><Blob /><WhiteTab /></BottomStrip>
    </Page>
  );
}
